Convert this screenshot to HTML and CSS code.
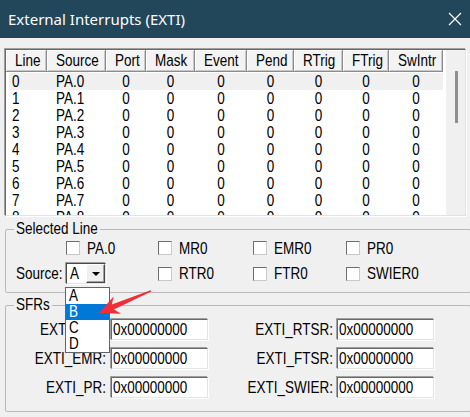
FILE: index.html
```html
<!DOCTYPE html>
<html>
<head>
<meta charset="utf-8">
<title>External Interrupts (EXTI)</title>
<link rel="stylesheet" href="styles.css">
</head>
<body>
<div class="window">
  <div class="titlebar">
    <span class="title">External Interrupts (EXTI)</span>
    <svg class="close" viewBox="0 0 14 14" width="14" height="14"><path d="M1 1 L13 13 M13 1 L1 13" stroke="#fff" stroke-width="1.2" fill="none"/></svg>
  </div>
  <div class="client">
    <div class="listbox">
      <div class="listarea">
        <div class="grid hdr">
          <div class="h"><span class="tx">Line</span></div><div class="h"><span class="tx">Source</span></div><div class="h"><span class="tx">Port</span></div><div class="h"><span class="tx">Mask</span></div><div class="h"><span class="tx">Event</span></div><div class="h"><span class="tx">Pend</span></div><div class="h"><span class="tx">RTrig</span></div><div class="h"><span class="tx">FTrig</span></div><div class="h"><span class="tx">SwIntr</span></div>
        </div>
        <div class="rows">
          <div class="grid r hl"><span class="ln">0</span><span class="src">PA.0</span><span>0</span><span>0</span><span>0</span><span>0</span><span>0</span><span>0</span><span>0</span></div>
          <div class="grid r"><span class="ln">1</span><span class="src">PA.1</span><span>0</span><span>0</span><span>0</span><span>0</span><span>0</span><span>0</span><span>0</span></div>
          <div class="grid r"><span class="ln">2</span><span class="src">PA.2</span><span>0</span><span>0</span><span>0</span><span>0</span><span>0</span><span>0</span><span>0</span></div>
          <div class="grid r"><span class="ln">3</span><span class="src">PA.3</span><span>0</span><span>0</span><span>0</span><span>0</span><span>0</span><span>0</span><span>0</span></div>
          <div class="grid r"><span class="ln">4</span><span class="src">PA.4</span><span>0</span><span>0</span><span>0</span><span>0</span><span>0</span><span>0</span><span>0</span></div>
          <div class="grid r"><span class="ln">5</span><span class="src">PA.5</span><span>0</span><span>0</span><span>0</span><span>0</span><span>0</span><span>0</span><span>0</span></div>
          <div class="grid r"><span class="ln">6</span><span class="src">PA.6</span><span>0</span><span>0</span><span>0</span><span>0</span><span>0</span><span>0</span><span>0</span></div>
          <div class="grid r"><span class="ln">7</span><span class="src">PA.7</span><span>0</span><span>0</span><span>0</span><span>0</span><span>0</span><span>0</span><span>0</span></div>
          <div class="grid r"><span class="ln">8</span><span class="src">PA.8</span><span>0</span><span>0</span><span>0</span><span>0</span><span>0</span><span>0</span><span>0</span></div>
        </div>
      </div>
      <div class="vscroll"><div class="thumb"></div></div>
    </div>

    <fieldset class="group sel">
      <legend><span class="tx">Selected Line</span></legend>
      <div class="selgrid">
        <div></div>
        <label class="cb"><span class="box"></span><span class="tx">PA.0</span></label>
        <label class="cb"><span class="box"></span><span class="tx">MR0</span></label>
        <label class="cb"><span class="box"></span><span class="tx">EMR0</span></label>
        <label class="cb"><span class="box"></span><span class="tx">PR0</span></label>

        <div class="lbl"><span class="tx">Source:</span></div>
        <div class="combo">
          <span class="cval tx">A</span>
          <span class="cbtn"><span class="tri"></span></span>
          <div class="dropdown">
            <div class="opt"><span class="tx">A</span></div>
            <div class="opt on"><span class="tx">B</span></div>
            <div class="opt"><span class="tx">C</span></div>
            <div class="opt"><span class="tx">D</span></div>
          </div>
        </div>
        <label class="cb"><span class="box"></span><span class="tx">RTR0</span></label>
        <label class="cb"><span class="box"></span><span class="tx">FTR0</span></label>
        <label class="cb"><span class="box"></span><span class="tx">SWIER0</span></label>
      </div>
    </fieldset>

    <fieldset class="group sfrs">
      <legend><span class="tx">SFRs</span></legend>
      <div class="sfrgrid">
        <div class="rl"><span class="tx">EXTI_IMR:</span></div><div class="tbox"><span class="tx">0x00000000</span></div>
        <div class="rl"><span class="tx">EXTI_RTSR:</span></div><div class="tbox"><span class="tx">0x00000000</span></div>
        <div class="rl"><span class="tx">EXTI_EMR:</span></div><div class="tbox"><span class="tx">0x00000000</span></div>
        <div class="rl"><span class="tx">EXTI_FTSR:</span></div><div class="tbox"><span class="tx">0x00000000</span></div>
        <div class="rl"><span class="tx">EXTI_PR:</span></div><div class="tbox"><span class="tx">0x00000000</span></div>
        <div class="rl"><span class="tx">EXTI_SWIER:</span></div><div class="tbox"><span class="tx">0x00000000</span></div>
      </div>
    </fieldset>
  </div>

  <svg class="annot" viewBox="0 0 470 417" width="470" height="417">
    <polygon points="150.6,290.2 111.8,304.6 113.6,296.6 99,313 121.2,313.8 113.9,309.5 151.3,291.6" fill="#ee2f38"/>
  </svg>
</div>
</body>
</html>
```
FILE: styles.css
```css
html, body {
  margin: 0;
  padding: 0;
  overflow: hidden;
}

body {
  width: 470px;
  height: 417px;
  background: #f0f0f0;
  color: #000;
  font-family: "Liberation Sans", Arial, sans-serif;
  font-size: 13.5px;
}

.window {
  position: relative;
  width: 470px;
  height: 417px;
}

/* dialog text is tall and narrow: stretch the glyphs vertically */
.tx {
  display: inline-block;
  transform: scaleY(1.2);
}

/* ---------- title bar ---------- */
.titlebar {
  height: 38px;
  box-sizing: border-box;
  padding: 0 8px 0 8px;
  background: #22465a;
  display: flex;
  align-items: center;
  justify-content: space-between;
}

.title {
  font-family: "Noto Sans", "Open Sans", sans-serif;
  font-size: 15px;
  color: #fff;
}

.close {
  display: block;
}

/* ---------- client area ---------- */
.client {
  padding: 10px 3px 0 4px;
}

/* ---------- list view ---------- */
.listbox {
  margin: 1px;
  height: 167px;
  box-sizing: border-box;
  border: 1px solid;
  border-color: #696969 #e3e3e3 #e3e3e3 #696969;
  box-shadow: -1px -1px 0 #a0a0a0, 1px 1px 0 #fff;
  background: #fff;
  display: flex;
  overflow: hidden;
}

.listarea {
  width: 440px;
  flex: none;
  overflow: hidden;
}

.grid {
  display: grid;
  grid-template-columns: 41px 59px 40px 49px 52px 47px 49px 46px 54px;
}

.hdr {
  height: 22px;
}

.h {
  box-sizing: border-box;
  background: #f3f3f3;
  border-right: 1px solid #8c8c8c;
  border-bottom: 1px solid #8c8c8c;
  box-shadow: inset 1px 1px #fff, inset -1px -1px #c8c8c8;
  padding-left: 9px;
  line-height: 21px;
  white-space: nowrap;
  overflow: hidden;
}

.rows {
  margin-top: 1px;
  height: 142px;
  overflow: hidden;
}

.r {
  height: 17px;
  line-height: 17px;
}

.r span {
  text-align: center;
  transform: scaleY(1.2);
}

.r .ln {
  text-align: left;
  padding-left: 6px;
}

.r .src {
  text-align: left;
  padding-left: 9px;
}

.r.hl {
  background: linear-gradient(to right, transparent 3px, #f0f0f0 3px, #f0f0f0 437px, transparent 437px);
}

.vscroll {
  flex: 1;
  background: #f0f0f0;
}

.thumb {
  margin: 21px 0 0 9px;
  width: 3px;
  height: 52px;
  background: #8f8f8f;
}

/* ---------- group boxes ---------- */
.group {
  margin: 0 -4px 0 1px;
  padding: 0;
  border: 1px solid #b9b9b9;
  border-radius: 2px;
  min-width: 0;
}

.group legend {
  margin-left: 8px;
  padding: 0 2px;
  line-height: 16px;
  height: 16px;
}

.sel {
  margin-top: 5px;
}

.sfrs {
  margin-top: 4px;
}

.selgrid {
  display: grid;
  grid-template-columns: 50px 92px 95px 93px 1fr;
  grid-template-rows: 20px 23px;
  row-gap: 4px;
  padding: 1px 0 7px 10px;
  align-items: center;
}

.cb {
  display: flex;
  align-items: center;
  white-space: nowrap;
}

.box {
  width: 12px;
  height: 12px;
  background: #fff;
  border: 1px solid;
  border-color: #6e6e6e #c9c9c9 #c9c9c9 #6e6e6e;
  margin-right: 7px;
  flex: none;
}

.lbl {
  white-space: nowrap;
}

/* combo box */
.combo {
  position: relative;
  width: 40px;
  height: 21px;
  margin: 1px 0;
  box-sizing: border-box;
  border: 1px solid;
  border-color: #4a4a4a #e3e3e3 #e3e3e3 #4a4a4a;
  box-shadow: -1px -1px 0 #a0a0a0, 1px 1px 0 #fff;
  background: #fff;
  display: flex;
  align-items: center;
  justify-content: space-between;
}

.cval {
  margin-left: 3px;
  line-height: 19px;
}

.cbtn {
  width: 19px;
  height: 19px;
  box-sizing: border-box;
  background: #f0f0f0;
  border: 1px solid;
  border-color: #fff #4a4a4a #4a4a4a #fff;
  box-shadow: inset -1px -1px #a0a0a0;
  display: flex;
  align-items: center;
  justify-content: center;
}

.tri {
  width: 0;
  height: 0;
  border-left: 4px solid transparent;
  border-right: 4px solid transparent;
  border-top: 4px solid #000;
  margin-top: 1px;
}

.dropdown {
  position: absolute;
  left: -2px;
  top: 23px;
  width: 45px;
  box-sizing: border-box;
  border: 1px solid #646464;
  background: #fff;
  z-index: 5;
}

.opt {
  height: 16px;
  line-height: 16px;
  padding-left: 3px;
}

.opt.on {
  background: #0078d7;
  color: #fff;
}

/* SFR grid */
.sfrgrid {
  display: grid;
  grid-template-columns: 104px 99px 127px 98px;
  grid-auto-rows: 23px;
  row-gap: 6px;
  padding: 5px 0 12px 0;
  align-items: center;
}

.rl {
  text-align: right;
  padding-right: 4px;
  white-space: nowrap;
}

.sfrgrid .rl:nth-child(4n+3) {
  padding-right: 3px;
}

.tbox {
  margin: 1px;
  width: 97px;
  height: 21px;
  box-sizing: border-box;
  border: 1px solid;
  border-color: #696969 #e3e3e3 #e3e3e3 #696969;
  box-shadow: -1px -1px 0 #a0a0a0, 1px 1px 0 #fff;
  background: #fff;
  padding-left: 1px;
  line-height: 19px;
  white-space: nowrap;
  overflow: hidden;
}

/* annotation arrow */
.annot {
  position: absolute;
  left: 0;
  top: 0;
  pointer-events: none;
  z-index: 10;
}
```
